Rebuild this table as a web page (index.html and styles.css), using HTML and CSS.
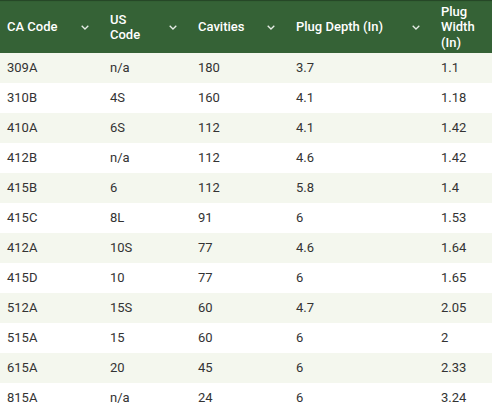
FILE: index.html
```html
<!DOCTYPE html>
<html>
<head>
<meta charset="utf-8">
<link rel="stylesheet" href="styles.css">
</head>
<body>
<table class="grid">
  <colgroup>
    <col class="c1"><col class="c2"><col class="c3"><col class="c4"><col class="c5">
  </colgroup>
  <thead>
    <tr>
      <th><div class="hd"><span>CA Code</span><svg class="chev" viewBox="0 0 8 5"><path d="M0.7 0.7 L4 4 L7.3 0.7"/></svg></div></th>
      <th><div class="hd"><span>US<br>Code</span><svg class="chev" viewBox="0 0 8 5"><path d="M0.7 0.7 L4 4 L7.3 0.7"/></svg></div></th>
      <th><div class="hd"><span>Cavities</span><svg class="chev" viewBox="0 0 8 5"><path d="M0.7 0.7 L4 4 L7.3 0.7"/></svg></div></th>
      <th><div class="hd"><span>Plug Depth (In)</span><svg class="chev" viewBox="0 0 8 5"><path d="M0.7 0.7 L4 4 L7.3 0.7"/></svg></div></th>
      <th><div class="hd"><span>Plug<br>Width<br>(In)</span></div></th>
    </tr>
  </thead>
  <tbody>
    <tr><td>309A</td><td>n/a</td><td>180</td><td>3.7</td><td>1.1</td></tr>
    <tr><td>310B</td><td>4S</td><td>160</td><td>4.1</td><td>1.18</td></tr>
    <tr><td>410A</td><td>6S</td><td>112</td><td>4.1</td><td>1.42</td></tr>
    <tr><td>412B</td><td>n/a</td><td>112</td><td>4.6</td><td>1.42</td></tr>
    <tr><td>415B</td><td>6</td><td>112</td><td>5.8</td><td>1.4</td></tr>
    <tr><td>415C</td><td>8L</td><td>91</td><td>6</td><td>1.53</td></tr>
    <tr><td>412A</td><td>10S</td><td>77</td><td>4.6</td><td>1.64</td></tr>
    <tr><td>415D</td><td>10</td><td>77</td><td>6</td><td>1.65</td></tr>
    <tr><td>512A</td><td>15S</td><td>60</td><td>4.7</td><td>2.05</td></tr>
    <tr><td>515A</td><td>15</td><td>60</td><td>6</td><td>2</td></tr>
    <tr><td>615A</td><td>20</td><td>45</td><td>6</td><td>2.33</td></tr>
    <tr><td>815A</td><td>n/a</td><td>24</td><td>6</td><td>3.24</td></tr>
  </tbody>
</table>
</body>
</html>
```

FILE: styles.css
```css
html, body {
  margin: 0;
  padding: 0;
  background: #ffffff;
}
body {
  font-family: Roboto, "Liberation Sans", sans-serif;
  font-size: 13px;
  color: #333333;
}
.grid {
  width: 492px;
  border-collapse: collapse;
  table-layout: fixed;
}
.c1 { width: 103px; }
.c2 { width: 88px; }
.c3 { width: 98px; }
.c4 { width: 145px; }
.c5 { width: 58px; }
thead tr {
  background: #356236;
  box-shadow: inset 0 2px 1px -1px #254526;
}
th {
  height: 53px;
  padding: 0;
  text-align: left;
  font-weight: 500;
  color: #ffffff;
  vertical-align: middle;
}
.hd {
  display: flex;
  align-items: center;
  justify-content: space-between;
  padding: 1px 14px 0 7px;
  line-height: 15.5px;
}
.chev {
  width: 8px;
  height: 5px;
  flex: none;
  fill: none;
  stroke: #e6ece6;
  stroke-width: 1.3;
}
td {
  height: 30px;
  padding: 0 0 0 7px;
  line-height: 30px;
  white-space: nowrap;
}
tbody tr:nth-child(odd) {
  background: #f4f7ee;
}
```
